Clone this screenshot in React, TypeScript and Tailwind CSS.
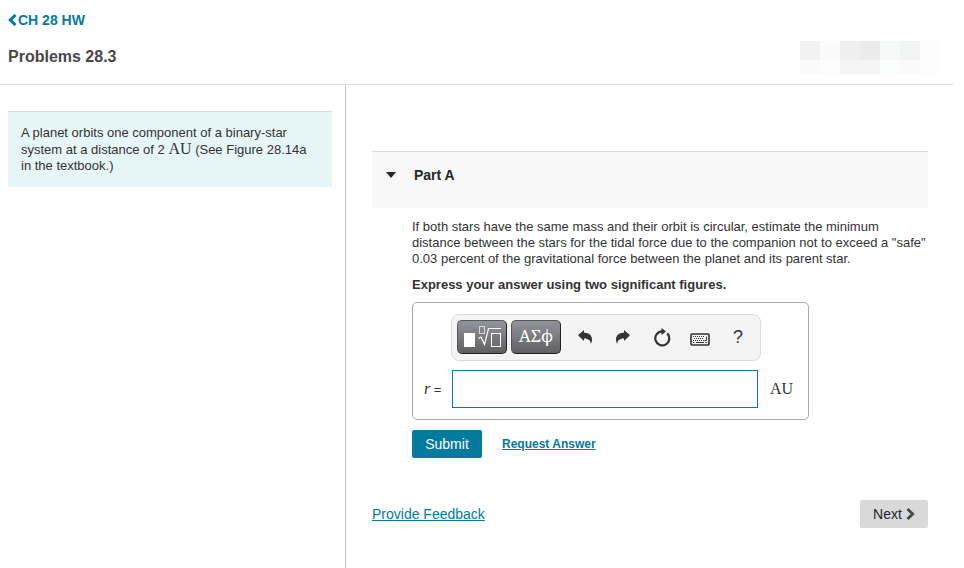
import React from 'react';

const avatarBlocks = [
  ['bg-[#f2f2f2]', 'bg-[#fbfbfb]', 'bg-[#efefef]', 'bg-[#ebebeb]', 'bg-[#f6f9f8]', 'bg-[#f2f4f4]', 'bg-[#fcfcfc]'],
  ['bg-[#fbfbfb]', 'bg-[#fdfdfd]', 'bg-[#f5f5f5]', 'bg-[#f5f5f5]', 'bg-[#fcfdfd]', 'bg-[#fafafa]', 'bg-[#fdfdfd]'],
];

const Header: React.FC = () => (
  <header className="flex items-end justify-between border-b border-[#dcdcdc] pt-2.5 pr-[13px] pb-2.5 pl-2">
    <div>
      <a href="#assignment" className="flex items-center text-sm leading-5 font-bold text-[#047a9c]">
        <svg viewBox="0 0 9 12" className="mr-px h-3 w-[9px]" fill="none" stroke="currentColor" strokeWidth="3">
          <path d="M7.5 1 2.3 6l5.2 5" />
        </svg>
        CH 28 HW
      </a>
      <h1 className="mt-[17px] mb-[7px] text-base leading-5 font-bold text-[#484848]">Problems 28.3</h1>
    </div>
    <div aria-hidden="true">
      {avatarBlocks.map((row, i) => (
        <div key={i} className="flex">
          {row.map((color, j) => (
            <div key={j} className={`w-5 ${i === 0 ? 'h-[19px]' : 'h-3.5'} ${color}`}></div>
          ))}
        </div>
      ))}
    </div>
  </header>
);

const Toolbar: React.FC = () => {
  const dark =
    'flex h-[34px] w-[50px] items-center justify-center rounded-[5px] border border-[#55555a] border-r-[#222] border-b-[#222] bg-linear-to-b from-[#93939b] to-[#606062] text-white';
  const plain = 'flex h-6 w-6 items-center justify-center text-[#333]';

  return (
    <div className="flex w-[310px] items-center rounded-lg border border-[#dcdcdc] bg-[#f4f4f4] pt-[5px] pr-2.5 pb-1.5 pl-[5px]">
      <button type="button" aria-label="Templates" className={dark}>
        <svg viewBox="0 0 40 26" className="h-[26px] w-10 shrink-0" fill="none" stroke="white">
          <rect x="2" y="9" width="11" height="14" fill="white" stroke="none" />
          <rect x="17.5" y="2.5" width="5" height="7" strokeOpacity=".7" />
          <path d="M16.5 14.5 19 13l3.5 7.5L26.5 4.5h12.5" strokeWidth="1.2" />
          <rect x="29.5" y="9.5" width="9" height="13" />
        </svg>
      </button>
      <button
        type="button"
        aria-label="Symbols"
        className={`${dark} ml-1 pb-0.5 font-['Noto_Serif','Liberation_Serif',serif] text-[17px] leading-5`}
      >
        ΑΣϕ
      </button>
      <div className="ml-3 flex flex-1 items-center justify-between">
        <button type="button" aria-label="Undo" className={plain}>
          <svg viewBox="0 0 14 14" className="h-3.5 w-3.5" fill="currentColor">
            <path d="M0 5.3 6 0v2.8c4.8 0 8 2.5 8 6.8 0 1.8-.6 3.2-1.4 4.4.3-3.4-2-5.6-6.6-5.6v2.6z" />
          </svg>
        </button>
        <button type="button" aria-label="Redo" className={plain}>
          <svg viewBox="0 0 14 14" className="h-3.5 w-3.5" fill="currentColor">
            <path d="M14 5.3 8 0v2.8C3.2 2.8 0 5.3 0 9.6c0 1.8.6 3.2 1.4 4.4C1.1 10.6 3.4 8.4 8 8.4v2.6z" />
          </svg>
        </button>
        <button type="button" aria-label="Reset" className={plain}>
          <svg viewBox="0 0 18 19" className="h-[19px] w-[18px]" fill="none" stroke="currentColor">
            <path d="M14.2 5.4A7 7 0 1 1 9 3.4" strokeWidth="2.2" />
            <path d="M8.5 0v7l4.5-3.5z" fill="currentColor" stroke="none" />
          </svg>
        </button>
        <button type="button" aria-label="Keyboard shortcuts" className={plain}>
          <svg viewBox="0 0 20 13" className="mt-1 h-[13px] w-5" fill="none" stroke="currentColor">
            <rect x="1" y="1" width="18" height="11" rx="1" strokeWidth="1.6" />
            <path d="M3 3.5h12M4 5.5h10M3 7.5h12" strokeDasharray="1 1" />
            <path d="M14.5 7.5h2v-4M3 9.5h1.5M6 9.5h8M15.5 9.5H17" />
          </svg>
        </button>
        <button type="button" aria-label="Help" className={`${plain} text-lg`}>
          ?
        </button>
      </div>
    </div>
  );
};

const PartA: React.FC = () => (
  <section>
    <div className="flex h-[57px] items-start border-t border-[#dcdcdc] bg-[#f8f8f8] pt-[13px] pl-3.5">
      <button type="button" className="flex items-center text-sm leading-5 font-bold text-[#252525]">
        <svg viewBox="0 0 10 6" className="mr-[18px] h-1.5 w-2.5" fill="currentColor">
          <path d="M0 0h10L5 6z" />
        </svg>
        Part A
      </button>
    </div>
    <div className="pt-[11px] pl-10 text-[13px] leading-4 text-[#333]">
      <p>
        If both stars have the same mass and their orbit is circular, estimate the minimum distance between the stars
        for the tidal force due to the companion not to exceed a "safe" 0.03 percent of the gravitational force between
        the planet and its parent star.
      </p>
      <p className="mt-2.5 font-bold">Express your answer using two significant figures.</p>
      <form onSubmit={(e) => e.preventDefault()}>
        <div className="mt-[9px] w-fit rounded-[5px] border border-[#a8a8a8] pt-[11px] pr-[15px] pb-[11px] pl-[11px]">
          <div className="pl-[27px]">
            <Toolbar />
          </div>
          <div className="mt-[9px] flex items-center">
            <label htmlFor="answer" className="w-7">
              <i className="font-['Liberation_Serif',serif] text-base">r</i> =
            </label>
            <input
              id="answer"
              type="text"
              className="h-[38px] w-[306px] border border-[#047a9c] bg-white px-2 text-base outline-none"
            />
            <span className="ml-3 font-['Liberation_Serif',serif] text-base">AU</span>
          </div>
        </div>
        <div className="mt-2.5 flex items-center gap-5">
          <button type="submit" className="h-7 w-[70px] rounded-xs bg-[#047a9c] text-sm text-white">
            Submit
          </button>
          <a href="#answer" className="text-xs font-bold text-[#047a9c] underline">
            Request Answer
          </a>
        </div>
      </form>
    </div>
  </section>
);

const App: React.FC = () => {
  return (
    <div className="flex min-h-screen flex-col bg-white pr-[11px] font-['Liberation_Sans',Arial,sans-serif]">
      <Header />
      <div className="flex flex-1">
        <aside className="w-[346px] shrink-0 border-r border-[#c3c6cc] pt-[26px] pr-[13px] pl-2">
          <p className="border-t border-[#d6dfe0] bg-[#e6f6f6] p-[13px] text-[13px] leading-4 text-[#333]">
            A planet orbits one component of a binary-star system at a distance of 2{' '}
            <span className="font-['Liberation_Serif',serif] text-base leading-4">AU</span> (See Figure 28.14a in the
            textbook.)
          </p>
        </aside>
        <main className="flex-1 pt-[66px] pr-[25px] pb-10 pl-[26px]">
          <PartA />
          <footer className="mt-[42px] flex items-center justify-between">
            <a href="#feedback" className="text-sm text-[#047a9c] underline">
              Provide Feedback
            </a>
            <button
              type="button"
              className="flex h-7 w-[68px] items-center justify-center gap-1 rounded-xs bg-[#d9d9d9] text-sm text-[#252525]"
            >
              Next
              <svg viewBox="0 0 9 12" className="h-3 w-[9px]" fill="none" stroke="#484848" strokeWidth="2.8">
                <path d="M1.5 1 6.7 6l-5.2 5" />
              </svg>
            </button>
          </footer>
        </main>
      </div>
    </div>
  );
};

export default App;
